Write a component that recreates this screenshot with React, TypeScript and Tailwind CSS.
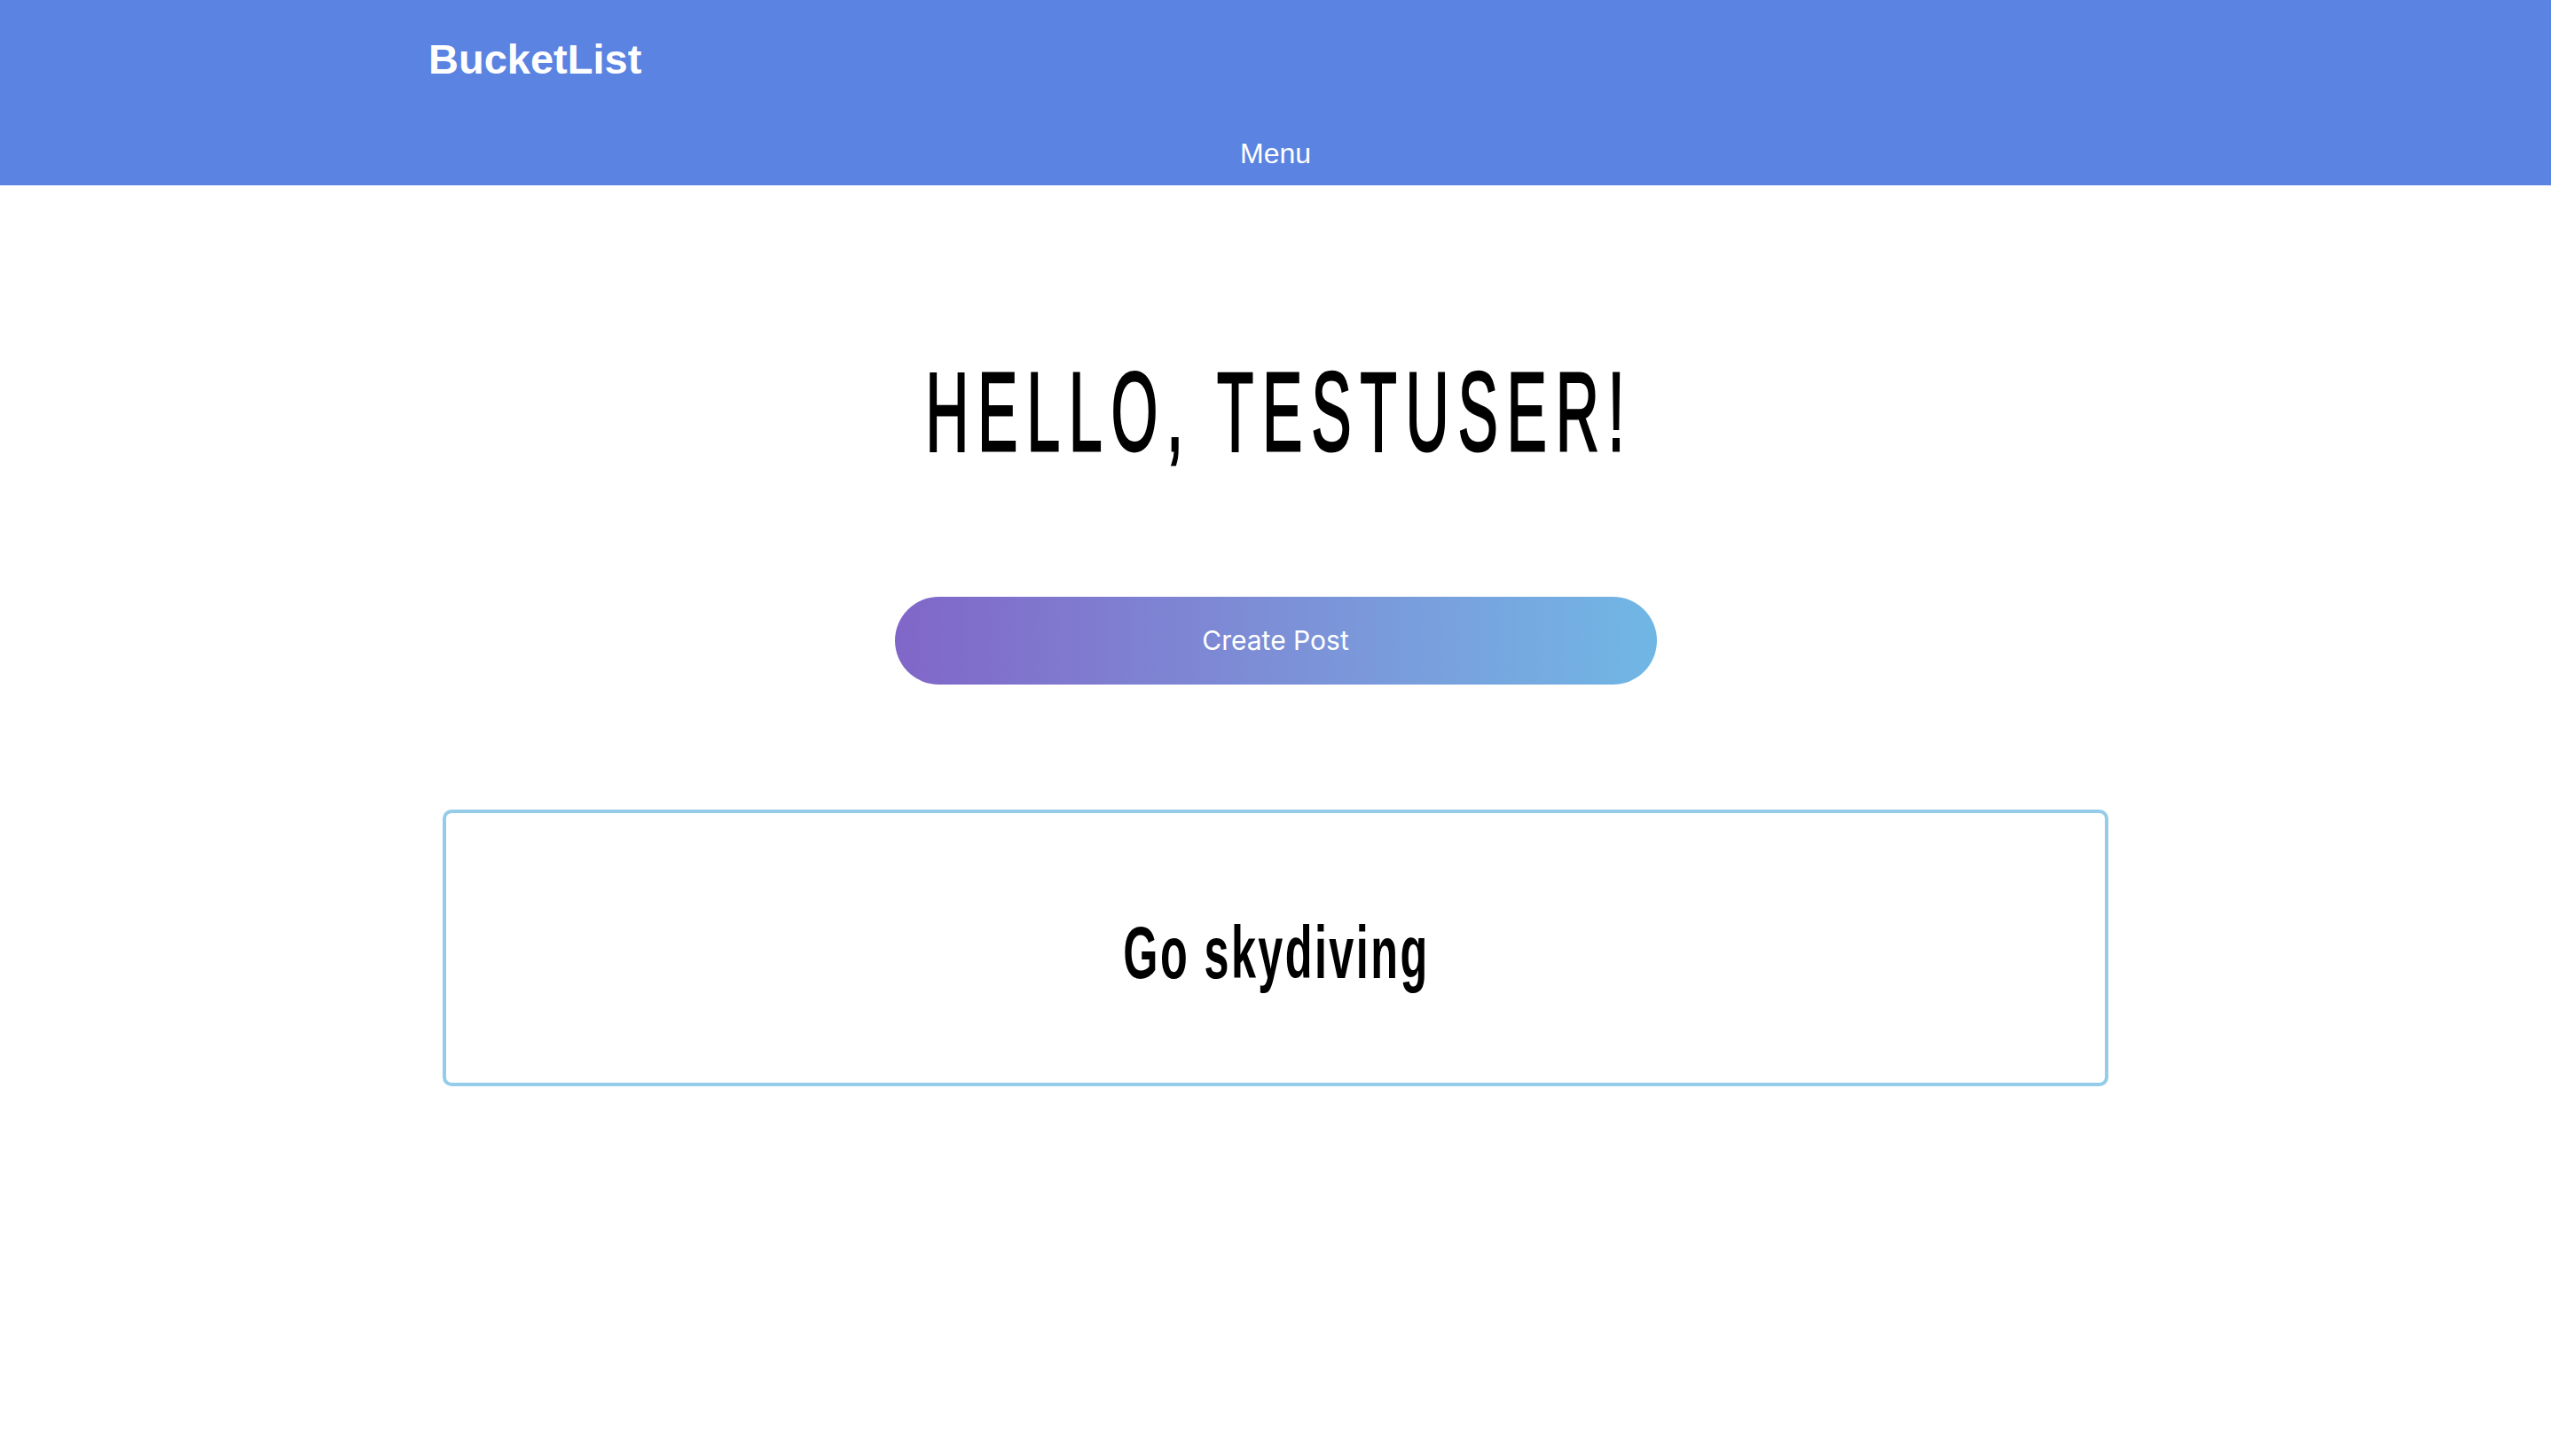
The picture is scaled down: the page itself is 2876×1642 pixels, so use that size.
const sans = { fontFamily: '"Liberation Sans", Arial, sans-serif' }

export default function App() {
  return (
    <div className="min-h-screen bg-white" style={sans}>
      <header className="flex h-[209px] flex-col bg-[#5b83e1] text-white">
        <div className="pl-[483px] pt-[43px] text-[47px] font-bold leading-none">BucketList</div>
        <div className="mt-[67px] text-center text-[32px] leading-none">Menu</div>
      </header>

      <main className="flex flex-col items-center pt-[193px]">
        <h1 className="text-[126px] font-normal leading-none text-black">
          <span className="inline-block scale-x-[0.535] pl-[19px] tracking-[19px] [-webkit-text-stroke:3px_black]">
            HELLO, TESTUSER!
          </span>
        </h1>

        <button
          className="mt-[145px] flex h-[99px] w-[859px] items-center justify-center rounded-full bg-gradient-to-r from-[#8066c8] to-[#70b7e5] text-[30px] text-white"
          style={{ fontFamily: 'Inter, "Liberation Sans", sans-serif' }}
        >
          Create Post
        </button>

        <div className="mt-[141px] flex h-[312px] w-[1878px] items-center justify-center rounded-[10px] border-4 border-[#94cce9] pt-[10px]">
          <span className="inline-block scale-x-[0.6] pl-[4px] text-[84px] font-bold leading-none tracking-[4px] text-black">
            Go skydiving
          </span>
        </div>
      </main>
    </div>
  )
}
